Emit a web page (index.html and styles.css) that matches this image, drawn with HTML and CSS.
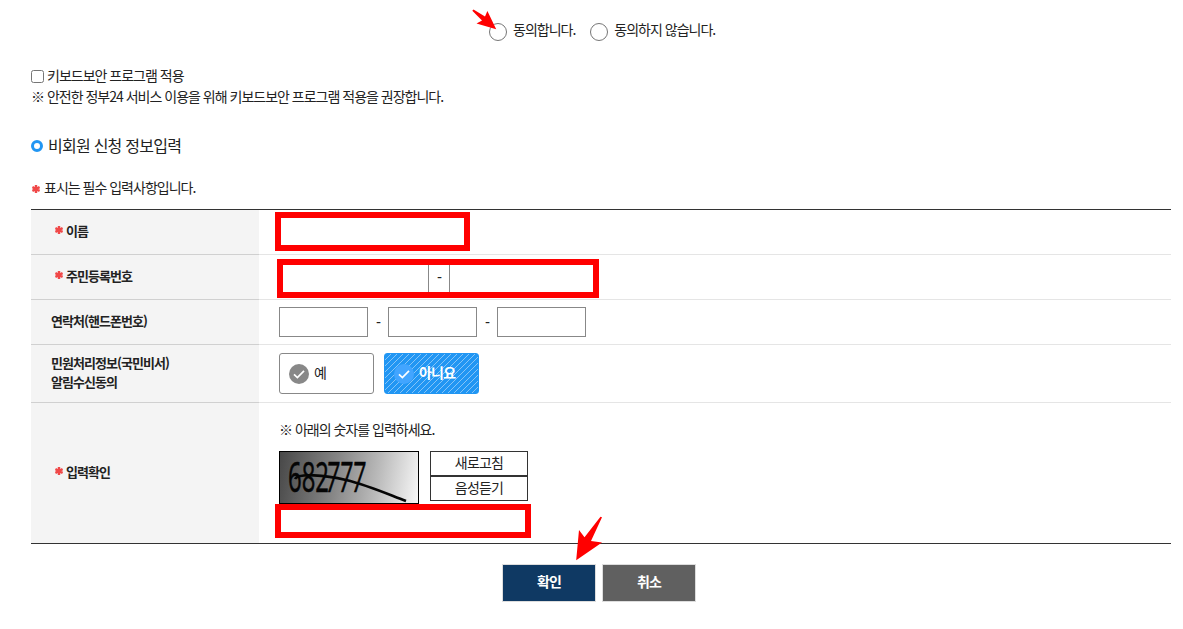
FILE: index.html
```
<!DOCTYPE html>
<html lang="ko">
<head>
  <meta charset="UTF-8">
  <meta name="viewport" content="width=device-width, initial-scale=1.0">
  <title>비회원 신청 정보입력</title>
  <link rel="stylesheet" href="styles.css">
</head>
<body>
  <div id="container">
    <div class="agree">
      <label><input type="radio" name="agree"><span>동의합니다.</span></label>
      <label><input type="radio" name="agree"><span>동의하지 않습니다.</span></label>
    </div>

    <div class="security">
      <label><input type="checkbox"><span>키보드보안 프로그램 적용</span></label>
      <p>※ 안전한 정부24 서비스 이용을 위해 키보드보안 프로그램 적용을 권장합니다.</p>
    </div>

    <h2>비회원 신청 정보입력</h2>
    <p class="required-info"><svg class="star" viewBox="0 0 8 8"><path d="M4 0v8M.4 2l7.2 4M.4 6l7.2-4"/></svg>표시는 필수 입력사항입니다.</p>

    <div class="form-table">
      <div class="row">
        <div class="th required"><svg class="star" viewBox="0 0 8 8"><path d="M4 0v8M.4 2l7.2 4M.4 6l7.2-4"/></svg>이름</div>
        <div class="td"><input class="name" type="text"></div>
      </div>
      <div class="row">
        <div class="th required"><svg class="star" viewBox="0 0 8 8"><path d="M4 0v8M.4 2l7.2 4M.4 6l7.2-4"/></svg>주민등록번호</div>
        <div class="td"><input class="jumin" type="text"><span class="dash">-</span><input class="jumin" type="password"></div>
      </div>
      <div class="row">
        <div class="th">연락처(핸드폰번호)</div>
        <div class="td"><input class="phone" type="text"><span class="dash">-</span><input class="phone" type="text"><span class="dash">-</span><input class="phone" type="text"></div>
      </div>
      <div class="row row-notice">
        <div class="th">민원처리정보(국민비서)<br>알림수신동의</div>
        <div class="td">
          <button class="choice"><svg viewBox="0 0 20 20"><circle cx="10" cy="10" r="10"/><path d="M5 10.3l3.4 3.3 6.6-6.8"/></svg>예</button>
          <button class="choice on"><svg viewBox="0 0 20 20"><circle cx="10" cy="10" r="10"/><path d="M5 10.3l3.4 3.3 6.6-6.8"/></svg>아니요</button>
        </div>
      </div>
      <div class="row row-captcha">
        <div class="th required"><svg class="star" viewBox="0 0 8 8"><path d="M4 0v8M.4 2l7.2 4M.4 6l7.2-4"/></svg>입력확인</div>
        <div class="td">
          <p>※ 아래의 숫자를 입력하세요.</p>
          <div class="captcha">
            <svg class="captcha-img" viewBox="0 0 138 51">
              <text x="8" y="40" textLength="41" lengthAdjust="spacingAndGlyphs">682</text>
              <text transform="translate(45 40) skewX(-5)" textLength="39" lengthAdjust="spacingAndGlyphs">777</text>
              <path d="M15 27C18 21 45 23 66 28S105 41 126 49"/>
            </svg>
            <div class="captcha-buttons">
              <button>새로고침</button>
              <button>음성듣기</button>
            </div>
          </div>
          <input class="answer" type="text">
        </div>
      </div>
    </div>

    <div class="buttons">
      <button class="ok">확인</button>
      <button class="cancel">취소</button>
    </div>

    <!-- guide marks over the form -->
    <div class="mark mark-name"></div>
    <div class="mark mark-jumin"></div>
    <div class="mark mark-answer"></div>
    <svg class="arrow arrow-agree" viewBox="0 0 26 22"><path d="M1.5 .5L13 7.5L15.4 2L24.2 20.2L4.5 14.6L10 11.5L.3 1.8Z"/></svg>
    <svg class="arrow arrow-ok" viewBox="0 0 28 46"><path d="M27 1.3L16 25L27 26.5L1.2 44.3L4 14L9.5 21.3L25.5 .7Z"/></svg>
  </div>
</body>
</html>
```
FILE: styles.css
```
* {
  box-sizing: border-box;
}

body {
  margin: 0;
  background-color: #fff;
  color: #222;
  font-family: "Noto Sans CJK KR", sans-serif;
  font-size: 14px;
  line-height: 21px;
  letter-spacing: -1px;
}

#container {
  position: relative;
  width: 1183px;
  height: 629px;
  padding: 19px 12px 0 31px;
  overflow: hidden;
}

p {
  margin: 0;
}

button,
input {
  font-family: inherit;
  font-size: 14px;
  letter-spacing: inherit;
}

.agree {
  display: flex;
  gap: 15px;
  height: 46px;
  padding-left: 458px;
}

.agree label {
  display: flex;
  height: 21px;
}

.agree input {
  width: 18px;
  height: 18px;
  margin: 4px 6px 0 0;
  appearance: none;
  border: 1px solid #767676;
  border-radius: 50%;
}

.security {
  height: 68px;
}

.security label {
  display: flex;
}

.security input {
  width: 13px;
  height: 13px;
  margin: 5px 3px 0 0;
}

h2 {
  display: flex;
  align-items: center;
  gap: 5px;
  height: 24px;
  margin: 0 0 20px;
  font-size: 16px;
  font-weight: 400;
  line-height: 24px;
  letter-spacing: -0.75px;
}

h2::before {
  content: "";
  box-sizing: border-box;
  width: 12px;
  height: 12px;
  margin-top: 2px;
  border: 3px solid #2196f3;
  border-radius: 50%;
}

.star {
  width: 8px;
  height: 8px;
  fill: none;
  stroke: #f04848;
  stroke-width: 2.4;
}

.required-info {
  height: 32px;
}

.required-info .star {
  margin: 0 4px 0 1px;
}

.form-table {
  border-top: 1px solid #333;
  border-bottom: 1px solid #333;
}

.row {
  display: flex;
  height: 45px;
}

.th {
  display: flex;
  align-items: center;
  width: 228px;
  padding: 0 0 3px 20px;
  background-color: #f4f4f4;
  border-bottom: 1px solid #d0d0d0;
  font-size: 13px;
  font-weight: 700;
  line-height: 19px;
  letter-spacing: -0.95px;
}

.th.required {
  padding-left: 24px;
}

.th .star {
  margin: -1px 3px 0 0;
}

.td {
  display: flex;
  align-items: center;
  flex: 1;
  padding-left: 20px;
  border-bottom: 1px solid #e5e5e5;
}

.td input {
  height: 30px;
  padding: 0 8px;
  border: 1px solid #888;
  border-radius: 0;
}

.name {
  width: 188px;
}

.td .jumin {
  width: 150px;
  height: 29px;
  margin-top: 3px;
}

.phone {
  width: 89px;
}

.dash {
  width: 20px;
  text-align: center;
  font-weight: 500;
}

.row-notice {
  height: 58px;
}

.row-notice .th {
  padding-bottom: 4px;
}

.row-notice .td {
  gap: 10px;
}

.choice {
  display: flex;
  align-items: center;
  gap: 5px;
  width: 95px;
  height: 41px;
  padding: 0 0 4px 9px;
  background: #fff;
  border: 1px solid #888;
  border-radius: 3px;
  color: #222;
}

.choice svg {
  width: 20px;
  height: 20px;
  margin-top: 5px;
}

.choice circle {
  fill: #888;
}

.choice path {
  fill: none;
  stroke: #fff;
  stroke-width: 1.7;
}

.choice.on {
  background: repeating-linear-gradient(135deg, #2196f3 0 3.54px, #85c4f8 3.54px 4.243px);
  border-color: #2196f3;
  color: #fff;
  font-weight: 700;
  letter-spacing: -0.8px;
}

.choice.on circle {
  fill: #42a5ff;
}

.row-captcha {
  height: 140px;
}

.row-captcha .th,
.row-captcha .td {
  border-bottom: 0;
}

.row-captcha .th {
  padding-bottom: 4px;
}

.row-captcha .td {
  display: block;
  padding-top: 16px;
}

.captcha {
  display: flex;
  gap: 11px;
  margin-top: 11px;
}

.captcha-img {
  width: 140px;
  height: 53px;
  border: 1px solid #000;
  background: linear-gradient(100deg, #484848, #858585 40%, #bbb 70%, #f8f8f8);
  overflow: visible;
}

.captcha-img text {
  font-family: "Open Sans", sans-serif;
  font-size: 42px;
  letter-spacing: 0;
  fill: #050505;
  stroke: #050505;
  stroke-width: 0.6;
}

.captcha-img path {
  fill: none;
  stroke: #050505;
  stroke-width: 2.6;
}

.captcha-buttons {
  display: flex;
  flex-direction: column;
  width: 98px;
}

.captcha-buttons button {
  height: 25px;
  padding: 0 0 3px;
  background: #fff;
  border: 1px solid #333;
  border-bottom-width: 1px;
  color: #222;
  line-height: 20px;
  letter-spacing: -0.8px;
}

.td .answer {
  display: block;
  width: 247px;
  margin-top: 3px;
}

.buttons {
  display: flex;
  justify-content: center;
  gap: 6px;
  padding: 20px 4px 0 0;
}

.buttons button {
  width: 94px;
  height: 38px;
  padding: 0 0 4px;
  border: 1px solid #ddd;
  color: #fff;
  font-weight: 700;
  letter-spacing: -0.8px;
}

.buttons .ok {
  background-color: #0f3963;
}

.buttons .cancel {
  background-color: #606060;
}

.mark {
  position: absolute;
  border: 6px solid #f00;
}

.mark-name {
  left: 275px;
  top: 212px;
  width: 195px;
  height: 39px;
  background: #fff;
}

.mark-jumin {
  left: 277px;
  top: 259px;
  width: 322px;
  height: 39px;
}

.mark-answer {
  left: 275px;
  top: 504px;
  width: 256px;
  height: 34px;
}

.arrow {
  position: absolute;
  fill: #f00;
}

.arrow-agree {
  left: 472px;
  top: 9px;
  width: 26px;
  height: 22px;
}

.arrow-ok {
  left: 575px;
  top: 516px;
  width: 28px;
  height: 46px;
}
```
